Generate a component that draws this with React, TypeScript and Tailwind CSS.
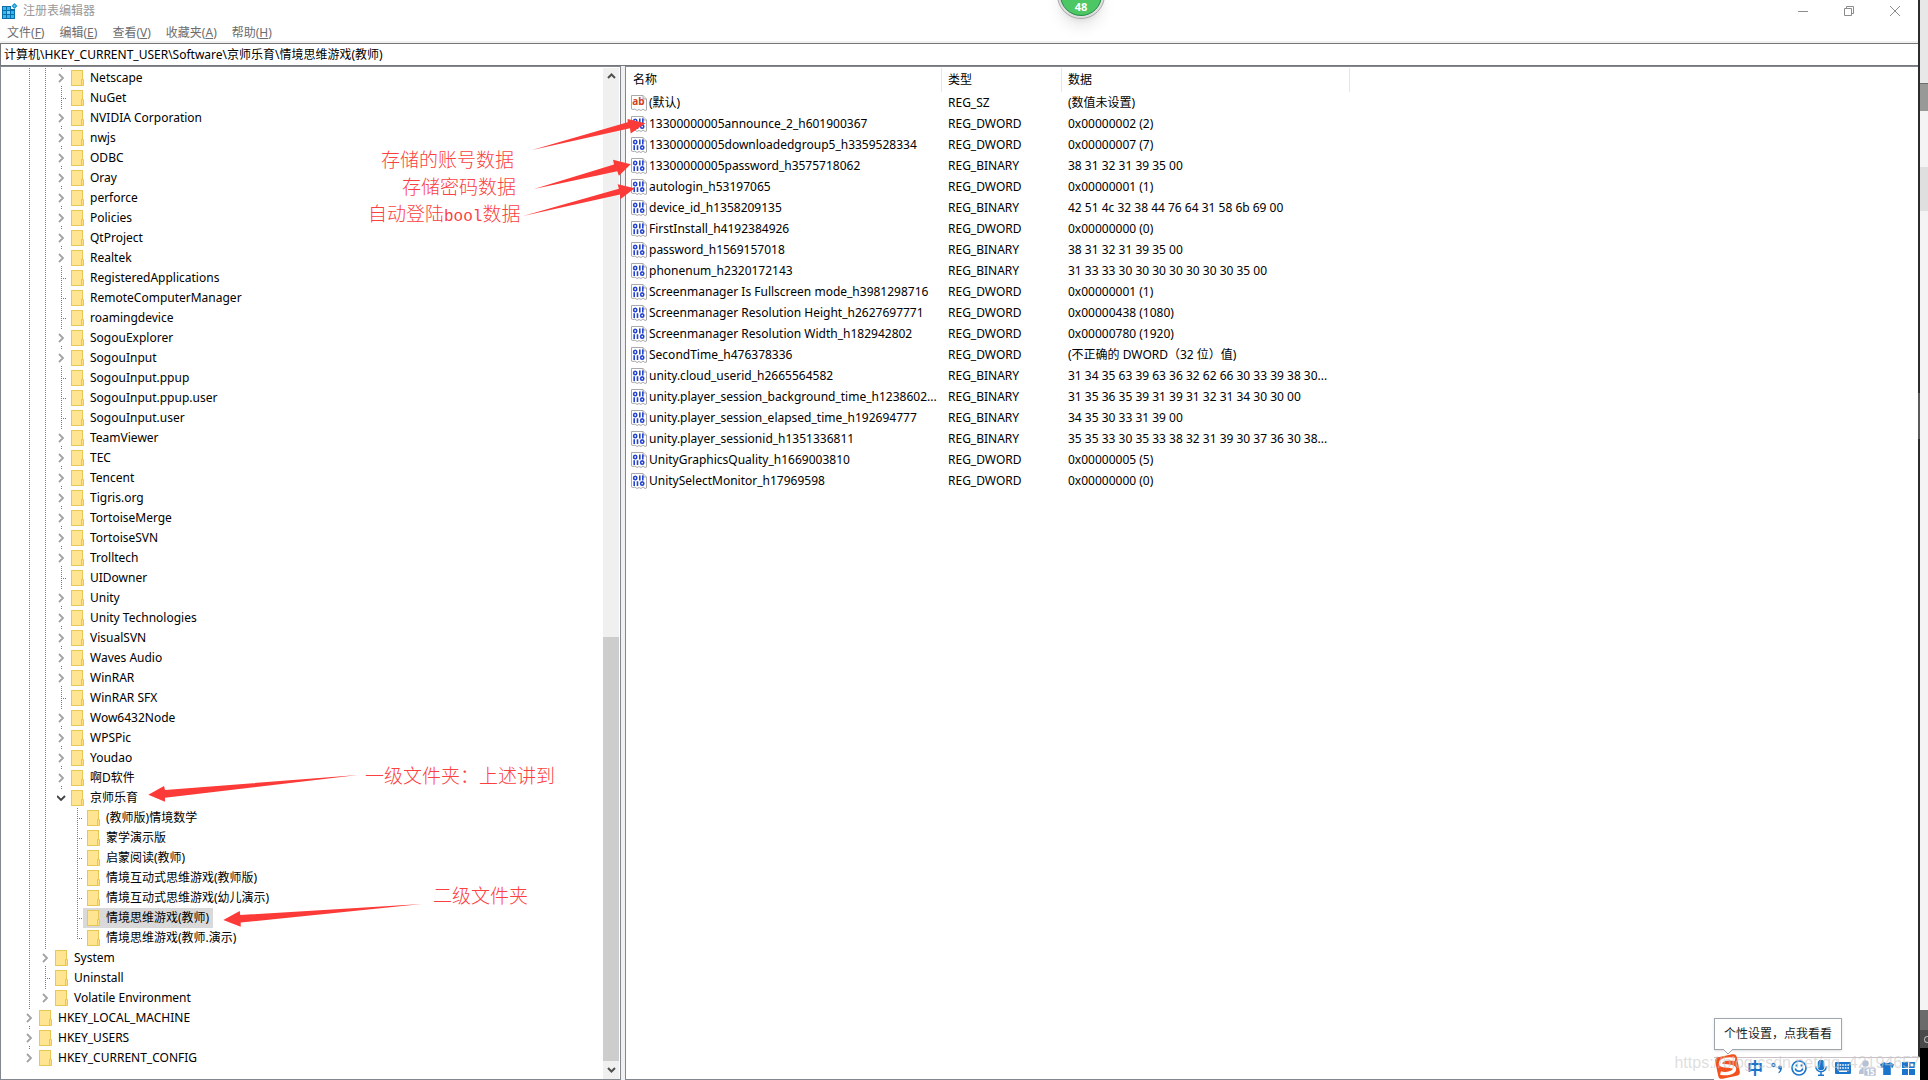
import type { ReactNode } from "react";

type TreeRow = {
  name: string;
  depth: number;
  branch: "closed" | "open" | "leaf";
  selected?: boolean;
  last?: boolean;
};

const closed = (name: string, depth = 2): TreeRow => ({ name, depth, branch: "closed" });
const leaf = (name: string, depth = 2): TreeRow => ({ name, depth, branch: "leaf" });

const TREE: TreeRow[] = [
  closed("Netscape"),
  leaf("NuGet"),
  closed("NVIDIA Corporation"),
  closed("nwjs"),
  closed("ODBC"),
  closed("Oray"),
  closed("perforce"),
  closed("Policies"),
  closed("QtProject"),
  closed("Realtek"),
  leaf("RegisteredApplications"),
  leaf("RemoteComputerManager"),
  leaf("roamingdevice"),
  closed("SogouExplorer"),
  closed("SogouInput"),
  leaf("SogouInput.ppup"),
  leaf("SogouInput.ppup.user"),
  leaf("SogouInput.user"),
  closed("TeamViewer"),
  closed("TEC"),
  closed("Tencent"),
  closed("Tigris.org"),
  closed("TortoiseMerge"),
  closed("TortoiseSVN"),
  closed("Trolltech"),
  leaf("UIDowner"),
  closed("Unity"),
  closed("Unity Technologies"),
  closed("VisualSVN"),
  closed("Waves Audio"),
  closed("WinRAR"),
  leaf("WinRAR SFX"),
  closed("Wow6432Node"),
  closed("WPSPic"),
  closed("Youdao"),
  closed("啊D软件"),
  { name: "京师乐育", depth: 2, branch: "open", last: true },
  leaf("(教师版)情境数学", 3),
  leaf("蒙学演示版", 3),
  leaf("启蒙阅读(教师)", 3),
  leaf("情境互动式思维游戏(教师版)", 3),
  leaf("情境互动式思维游戏(幼儿演示)", 3),
  { name: "情境思维游戏(教师)", depth: 3, branch: "leaf", selected: true },
  { name: "情境思维游戏(教师.演示)", depth: 3, branch: "leaf", last: true },
  closed("System", 1),
  leaf("Uninstall", 1),
  { name: "Volatile Environment", depth: 1, branch: "closed", last: true },
  closed("HKEY_LOCAL_MACHINE", 0),
  closed("HKEY_USERS", 0),
  { name: "HKEY_CURRENT_CONFIG", depth: 0, branch: "closed", last: true },
];

const VALUES: [string, string, string][] = [
  ["(默认)", "REG_SZ", "(数值未设置)"],
  ["13300000005announce_2_h601900367", "REG_DWORD", "0x00000002 (2)"],
  ["13300000005downloadedgroup5_h3359528334", "REG_DWORD", "0x00000007 (7)"],
  ["13300000005password_h3575718062", "REG_BINARY", "38 31 32 31 39 35 00"],
  ["autologin_h53197065", "REG_DWORD", "0x00000001 (1)"],
  ["device_id_h1358209135", "REG_BINARY", "42 51 4c 32 38 44 76 64 31 58 6b 69 00"],
  ["FirstInstall_h4192384926", "REG_DWORD", "0x00000000 (0)"],
  ["password_h1569157018", "REG_BINARY", "38 31 32 31 39 35 00"],
  ["phonenum_h2320172143", "REG_BINARY", "31 33 33 30 30 30 30 30 30 30 35 00"],
  ["Screenmanager Is Fullscreen mode_h3981298716", "REG_DWORD", "0x00000001 (1)"],
  ["Screenmanager Resolution Height_h2627697771", "REG_DWORD", "0x00000438 (1080)"],
  ["Screenmanager Resolution Width_h182942802", "REG_DWORD", "0x00000780 (1920)"],
  ["SecondTime_h476378336", "REG_DWORD", "(不正确的 DWORD（32 位）值)"],
  ["unity.cloud_userid_h2665564582", "REG_BINARY", "31 34 35 63 39 63 36 32 62 66 30 33 39 38 30..."],
  ["unity.player_session_background_time_h1238602...", "REG_BINARY", "31 35 36 35 39 31 39 31 32 31 34 30 30 00"],
  ["unity.player_session_elapsed_time_h192694777", "REG_BINARY", "34 35 30 33 31 39 00"],
  ["unity.player_sessionid_h1351336811", "REG_BINARY", "35 35 33 30 35 33 38 32 31 39 30 37 36 30 38..."],
  ["UnityGraphicsQuality_h1669003810", "REG_DWORD", "0x00000005 (5)"],
  ["UnitySelectMonitor_h17969598", "REG_DWORD", "0x00000000 (0)"],
];

const MENUS: [string, string][] = [
  ["文件", "F"],
  ["编辑", "E"],
  ["查看", "V"],
  ["收藏夹", "A"],
  ["帮助", "H"],
];

function RegeditIcon() {
  return (
    <svg width="16" height="16" viewBox="0 0 16 16" aria-hidden="true">
      <rect x="0" y="3" width="13" height="13" fill="#0b6ea8" />
      <g fill="#35b6ee">
        <rect x="1" y="4" width="3" height="3" />
        <rect x="5" y="4" width="3" height="3" />
        <rect x="1" y="8" width="3" height="3" />
        <rect x="5" y="8" width="3" height="3" fill="#6fd3fa" />
        <rect x="9" y="8" width="3" height="3" />
        <rect x="1" y="12" width="3" height="3" />
        <rect x="5" y="12" width="3" height="3" />
        <rect x="9" y="12" width="3" height="3" />
      </g>
      <rect x="9" y="2" width="5" height="4" fill="#fff" />
      <path d="M12.5 0 L15.5 3 L12.5 6 L9.5 3Z" fill="#1c93cf" />
      <path d="M12.5 1.7 L13.8 3 L12.5 4.3 L11.2 3Z" fill="#5cc8f4" />
    </svg>
  );
}

function FolderIcon() {
  return (
    <svg width="13" height="16" viewBox="0 0 13 16" className="shrink-0" aria-hidden="true">
      <rect x="0.5" y="0.5" width="11" height="15" fill="#ffe491" stroke="#e9c754" />
      <path d="M10.5 15.5 V9.5 H12.5 V15.5Z" fill="#ffdf80" stroke="#e9c754" />
    </svg>
  );
}

function PageShape() {
  return (
    <>
      <path
        d="M0.5 0.5 H12 L15.5 4 V15 L14 15.5 L12 14 L10 15.5 L8 14.5 L6 15.5 L4 14 L2 14.5 L0.5 14Z"
        fill="#fff"
        stroke="#a9a9a9"
      />
      <path d="M12 0.5 V4 H15.5" fill="#e6e6e6" stroke="#a9a9a9" />
    </>
  );
}

function BinaryIcon() {
  return (
    <svg width="16" height="16" viewBox="0 0 16 16" className="shrink-0" aria-hidden="true">
      <PageShape />
      <g fill="none" stroke="#2443cf" strokeWidth="1.6">
        <ellipse cx="4.2" cy="5" rx="1.6" ry="1.7" />
        <ellipse cx="11.2" cy="10.6" rx="1.6" ry="1.7" />
        <path d="M8.8 2.5V7.4M11.8 2.5V7.4M3.2 8.2V13M6.5 8.2V13" />
      </g>
    </svg>
  );
}

function StringIcon() {
  return (
    <svg width="16" height="16" viewBox="0 0 16 16" className="shrink-0" aria-hidden="true">
      <PageShape />
      <text x="7.5" y="10" textAnchor="middle" fill="#d0401f" className="font-['Noto_Sans',sans-serif] text-[10px] font-bold">
        ab
      </text>
    </svg>
  );
}

function VerticalDots({ half = false }: { half?: boolean }) {
  return (
    <span
      className={
        "w-px bg-[repeating-linear-gradient(to_bottom,#7a7a7a_0_1px,transparent_1px_2px)] " +
        (half ? "h-[11px]" : "h-5")
      }
    />
  );
}

function Connector({ row }: { row: TreeRow }) {
  return (
    <span className="grid h-5 w-[14px] shrink-0 grid-cols-[9px_5px]">
      <span className="col-start-1 row-start-1 flex justify-end">
        <VerticalDots half={row.last} />
      </span>
      {row.branch === "leaf" && (
        <span className="col-start-2 row-start-1 mt-[10px] h-px bg-[repeating-linear-gradient(to_right,transparent_0_1px,#7a7a7a_1px_2px)]" />
      )}
      {row.branch !== "leaf" && (
        <button
          type="button"
          aria-label={(row.branch === "open" ? "折叠 " : "展开 ") + row.name}
          className="col-span-2 col-start-1 row-start-1 my-auto flex h-4 items-center bg-white pl-1"
        >
          {row.branch === "closed" ? (
            <svg width="8" height="10" viewBox="0 0 8 10" fill="none">
              <path d="M2 1 L6 5 L2 9" stroke="#a3a3a3" strokeWidth="1.8" />
            </svg>
          ) : (
            <svg width="10" height="8" viewBox="0 0 10 8" fill="none">
              <path d="M0 2 L4 6 L8 2" stroke="#404040" strokeWidth="1.8" />
            </svg>
          )}
        </button>
      )}
    </span>
  );
}

function TreeItem({ row }: { row: TreeRow }) {
  return (
    <li className="flex h-5 pl-5">
      {Array.from({ length: row.depth }, (_, i) => (
        <span key={i} className="flex w-4 shrink-0 pl-2">
          {i < 2 && <VerticalDots />}
        </span>
      ))}
      <Connector row={row} />
      <button
        type="button"
        className={"flex items-center gap-[6px] px-1 whitespace-nowrap " + (row.selected ? "bg-[#d9d9d9]" : "")}
      >
        <FolderIcon />
        {row.name}
      </button>
    </li>
  );
}

function ScrollBar() {
  return (
    <div className="flex w-4 shrink-0 flex-col bg-[#f0f0f0]">
      <button type="button" aria-label="向上滚动" className="flex h-4 items-center justify-center">
        <svg width="9" height="6" viewBox="0 0 9 6" fill="none">
          <path d="M1 5 L4.5 1.5 L8 5" stroke="#505050" strokeWidth="2" />
        </svg>
      </button>
      <div className="grow-[69]" />
      <div className="grow-[53] bg-[#cdcdcd]" />
      <button type="button" aria-label="向下滚动" className="flex h-[18px] items-center justify-center">
        <svg width="9" height="6" viewBox="0 0 9 6" fill="none">
          <path d="M1 1 L4.5 4.5 L8 1" stroke="#505050" strokeWidth="2" />
        </svg>
      </button>
    </div>
  );
}

function TitleBar() {
  return (
    <header className="flex h-6 shrink-0 items-center pb-0.5 pl-0.5 text-[#999]">
      <RegeditIcon />
      <h1 className="ml-[5px] flex-1 text-xs">注册表编辑器</h1>
      <button type="button" aria-label="最小化" className="flex h-5 w-[46px] items-center justify-center">
        <svg width="10" height="10" viewBox="0 0 10 10" fill="none">
          <path d="M0 5.5H10" stroke="#8c8c8c" />
        </svg>
      </button>
      <button type="button" aria-label="还原" className="flex h-5 w-[46px] items-center justify-center">
        <svg width="10" height="10" viewBox="0 0 10 10" fill="none" stroke="#8c8c8c">
          <path d="M0.5 2.5H7.5V9.5H0.5ZM2.5 2.5V0.5H9.5V7.5H7.5" />
        </svg>
      </button>
      <button type="button" aria-label="关闭" className="flex h-5 w-[46px] items-center justify-center">
        <svg width="10" height="10" viewBox="0 0 10 10" fill="none">
          <path d="M0 0L10 10M10 0L0 10" stroke="#8c8c8c" />
        </svg>
      </button>
    </header>
  );
}

function ValueTable() {
  return (
    <section className="flex-1 overflow-hidden border-t border-b border-l border-[#828790] pt-px">
      <table className="w-full table-fixed border-separate border-spacing-0 text-left">
        <thead>
          <tr className="h-6">
            <th className="w-[316px] border-r border-[#e5e5e5] p-0 pl-[7px] font-normal">名称</th>
            <th className="w-[120px] border-r border-[#e5e5e5] p-0 pl-[6px] font-normal">类型</th>
            <th className="w-[288px] border-r border-[#e5e5e5] p-0 pl-[6px] font-normal">数据</th>
            <th className="p-0" />
          </tr>
        </thead>
        <tbody>
          {VALUES.map(([name, type, data]) => (
            <tr key={name} className="h-[21px]">
              <td className="p-0 pl-[5px]">
                <span className="flex items-center gap-[2px] whitespace-nowrap">
                  {type === "REG_SZ" ? <StringIcon /> : <BinaryIcon />}
                  {name}
                </span>
              </td>
              <td className="p-0 pl-[6px] whitespace-nowrap">{type}</td>
              <td className="p-0 pl-[6px] whitespace-nowrap">{data}</td>
              <td className="p-0" />
            </tr>
          ))}
        </tbody>
      </table>
    </section>
  );
}

const ARROWS = [
  "532,150 627.6,122.3 627.6,119 645.4,123.3 630.7,133.5 630,128.3",
  "534,189 614,164.5 613,159.7 630.7,164.3 618.9,175.7 617.3,171.3",
  "523,216 618.9,188.7 617.7,184.3 634.7,188.3 620.3,199.3 620,194.5",
  "358,775 165,790 164,786 148.3,794.7 165,801.7 165,797.8",
  "421.7,904 240.3,915 239.7,911 223.3,920 240.7,926.7 240.7,922.5",
];

function Note({ place, children }: { place: string; children: ReactNode }) {
  return (
    <p
      className={
        "absolute text-[19px] leading-6 font-light whitespace-nowrap text-[#fc4040] " + place
      }
    >
      {children}
    </p>
  );
}

function Annotations() {
  return (
    <div className="pointer-events-none absolute inset-0">
      <svg width="700" height="1000" viewBox="0 0 700 1000" fill="#fc3a38" aria-hidden="true">
        {ARROWS.map((points) => (
          <polygon key={points} points={points} />
        ))}
      </svg>
      <Note place="left-[381px] top-[148px]">存储的账号数据</Note>
      <Note place="left-[402px] top-[175px]">存储密码数据</Note>
      <Note place="left-[368px] top-[202px]">
        自动登陆<span className="font-['Liberation_Mono',monospace] text-base">bool</span>数据
      </Note>
      <Note place="left-[365px] top-[764px]">一级文件夹：上述讲到</Note>
      <Note place="left-[433px] top-[884px]">二级文件夹</Note>
    </div>
  );
}

function InputMethodBar() {
  return (
    <div className="absolute right-2 bottom-0 flex h-[23px] w-[206px] items-center border-t border-[#c9c0c8] bg-white pb-0.5">
      <div className="absolute bottom-[30px] left-0 w-32 border border-[#9fa6ad] bg-white py-1.5 text-center text-xs leading-[18px] whitespace-nowrap text-[#222] shadow">
        个性设置，点我看看
        <svg width="10" height="6" viewBox="0 0 10 6" className="absolute top-full left-2" fill="#fff">
          <path d="M0 0L5 5L10 0" stroke="#9fa6ad" />
        </svg>
      </div>
      <button type="button" aria-label="搜狗输入法" className="-mt-1 w-[27px] shrink-0">
        <svg width="27" height="27" viewBox="0 0 27 27" fill="none">
          <rect x="2.5" y="2.5" width="22" height="22" rx="4" fill="#f4511e" transform="rotate(-12 13.5 13.5)" />
          <path
            d="M21 6.500C14 5 6.500 6.500 6.500 10.500C6.500 14.500 20 11.500 20.500 15.500C20.800 20 12 21.500 6.500 20"
            stroke="#fff"
            strokeWidth="3.400"
          />
        </svg>
      </button>
      <button type="button" className="w-7 shrink-0 text-base leading-5 font-bold text-[#1b74cc]">
        中
      </button>
      <button type="button" aria-label="中文标点" className="flex w-4 justify-center">
        <svg width="12" height="12" viewBox="0 0 12 12" fill="#1b74cc">
          <circle cx="2.500" cy="3" r="1.500" fill="none" stroke="#1b74cc" strokeWidth="1.300" />
          <path d="M7 5.500a2 2 0 0 1 4 0c0 3-1.500 5-3.500 6v-1.500c1-.8 1.500-1.500 1.500-2.500a2 2 0 0 1-2-2Z" />
        </svg>
      </button>
      <button type="button" aria-label="表情" className="flex w-7 justify-center">
        <svg width="16" height="16" viewBox="0 0 16 16" fill="none" stroke="#1b74cc" strokeWidth="1.600">
          <circle cx="8" cy="8" r="7" />
          <path d="M4.200 8.500a4 4 0 0 0 7.600 0" />
          <path d="M5.500 4.500v2M10.500 4.500v2" strokeWidth="1.800" />
        </svg>
      </button>
      <button type="button" aria-label="语音" className="flex w-4 justify-center">
        <svg width="12" height="16" viewBox="0 0 12 16" fill="none" stroke="#1b74cc" strokeWidth="1.500">
          <rect x="3.500" y="0.500" width="5" height="9" rx="2.500" fill="#1b74cc" />
          <path d="M0.800 6.500a5.200 5.200 0 0 0 10.400 0M6 12v3M3 15.200h6" />
        </svg>
      </button>
      <button type="button" aria-label="软键盘" className="flex w-7 justify-center">
        <svg width="16" height="12" viewBox="0 0 16 12">
          <rect width="16" height="12" rx="1" fill="#1b74cc" />
          <path d="M2 3H14M2 6H14" stroke="#fff" strokeWidth="1.600" strokeDasharray="1.600 1" />
          <path d="M4 9.300H12" stroke="#fff" strokeWidth="1.400" />
        </svg>
      </button>
      <button type="button" aria-label="账号等级 15" className="flex w-[21px] justify-center">
        <svg width="17" height="16" viewBox="0 0 17 16" fill="#b6c1d6" className="shrink-0">
          <circle cx="6.500" cy="3.500" r="3.300" />
          <path d="M0 13C0 9 3 7.500 6.500 7.500H10V14H0Z" />
          <rect x="5" y="8" width="12" height="8" fill="#b6c1d6" stroke="#fff" strokeWidth="0.600" />
          <text x="11" y="15" textAnchor="middle" fill="#fff" className="text-[8px] font-bold">15</text>
        </svg>
      </button>
      <button type="button" aria-label="皮肤" className="flex w-[18px] justify-center">
        <svg width="14" height="13" viewBox="0 0 14 13" fill="#1b74cc">
          <path d="M4 0C5 1.500 9 1.500 10 0L14 2.500L12.500 6L10.800 5.300V13H3.200V5.300L1.500 6L0 2.500Z" />
        </svg>
      </button>
      <button type="button" aria-label="工具箱" className="flex w-6 justify-center">
        <svg width="13" height="13" viewBox="0 0 13 13" fill="#1b74cc">
          <path d="M0 0H6V6H0ZM0 7H6V13H0ZM7 7H13V13H7Z" />
          <rect x="7.800" y="0.800" width="4.400" height="4.400" fill="none" stroke="#1b74cc" strokeWidth="1.600" />
        </svg>
      </button>
    </div>
  );
}

function NeighbourWindow() {
  return (
    <>
      <div className="flex w-[2px] shrink-0 flex-col bg-[#2b2c2e]">
        <div className="h-[393px]" />
        <div className="h-[46px] bg-[#5a5a5a]" />
      </div>
      <div className="flex w-2 shrink-0 flex-col bg-[#f4f4f4]">
        <div className="h-[83px] bg-[#e8e8e8]" />
        <div className="h-7 border-t border-[#6e6e6c] bg-[#999997]" />
        <div className="h-14" />
        <div className="h-11 bg-[#dfdfdf]" />
        <div className="flex-1" />
        <div className="h-5 bg-[#6b6b6b]" />
        <div className="flex h-[18px] items-center justify-end bg-[#4a4a4a]">
          <div className="h-[7px] w-1 rounded-l-sm border border-r-0 border-[#b5b5b5]" />
        </div>
        <div className="h-8 bg-black" />
      </div>
    </>
  );
}

export default function App() {
  return (
    <div className="relative flex h-screen overflow-hidden bg-white font-['Noto_Sans','Noto_Sans_CJK_SC',sans-serif] text-xs text-black">
      <main className="flex min-w-0 flex-1 flex-col">
        <TitleBar />
        <nav className="flex h-[19px] shrink-0 items-center gap-[15px] border-b-2 border-[#f0f0f0] pl-[7px] text-[#6d6d6d]">
          {MENUS.map(([label, key]) => (
            <button key={key} type="button" className="leading-4">
              {label}(<u>{key}</u>)
            </button>
          ))}
        </nav>
        <input
          type="text"
          aria-label="地址"
          defaultValue="计算机\HKEY_CURRENT_USER\Software\京师乐育\情境思维游戏(教师)"
          className="h-[23px] shrink-0 border border-r-0 border-[#767779] pb-0.5 pl-[3px] outline-none"
        />
        <div className="flex min-h-0 flex-1 bg-[#f0f0f0]">
          <section className="flex w-[621px] shrink-0 border border-[#828790] bg-white pt-px pr-px">
            <ul className="min-w-0 flex-1 overflow-hidden">
              {TREE.map((row) => (
                <TreeItem key={row.name} row={row} />
              ))}
            </ul>
            <ScrollBar />
          </section>
          <div className="ml-1 flex flex-1 bg-white">
            <ValueTable />
          </div>
        </div>
      </main>
      <NeighbourWindow />
      <Annotations />
      <div className="absolute -top-[29px] left-[1057px] size-12 rounded-full border border-[#aaaaaa] bg-[#dedede] p-0.5 shadow-lg">
        <div className="flex size-full items-end justify-center rounded-full border border-[#25894a] bg-[#4cc764] pb-0.5 text-[11px] leading-[13px] font-bold text-white">
          48
        </div>
      </div>
      <InputMethodBar />
      <p className="pointer-events-none absolute right-2 bottom-[7px] font-['Liberation_Sans',sans-serif] text-base leading-5 text-[#c8c8c8]/60">
        https://blog.csdn.net/qq_42194657
      </p>
    </div>
  );
}
